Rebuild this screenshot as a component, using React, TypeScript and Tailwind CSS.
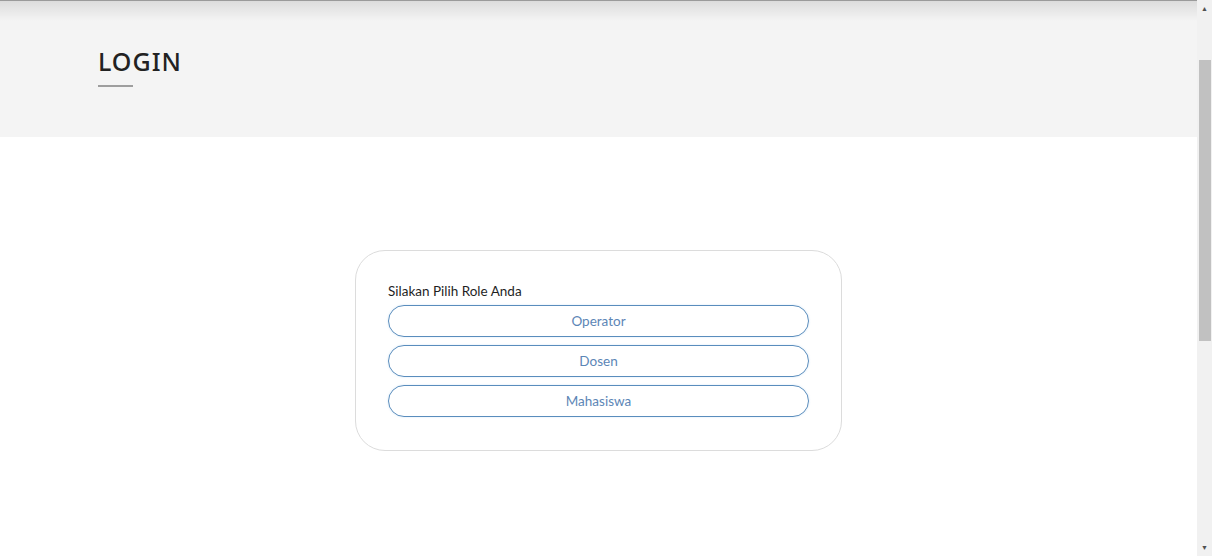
export default function App() {
  const roles = ["Operator", "Dosen", "Mahasiswa"];
  return (
    <div className="flex h-[556px] w-[1212px] overflow-hidden bg-white font-['Noto_Sans',sans-serif]">
      <div className="flex flex-1 flex-col">
        <header className="relative h-[137px] bg-[#f4f4f4] border-t border-[#9a9a9a] px-[98px] pt-[43px]">
          <div className="absolute inset-x-0 top-0 h-5 bg-gradient-to-b from-black/10 to-transparent" />
          <h1 className="text-[25px] leading-[34px] tracking-[1px] text-[#222] font-medium">LOGIN</h1>
          <div className="mt-[7px] h-[2px] w-[35px] bg-[#9e9e9e]" />
        </header>
        <main className="flex flex-1 justify-center pt-[113px]">
          <div className="h-[201px] w-[487px] rounded-[30px] border border-[#dcdcdc] px-8 pt-[31px] font-['Lato',sans-serif]">
            <p className="text-[13.5px] leading-[18px] text-[#1f1f1f]">Silakan Pilih Role Anda</p>
            <div className="mt-[5px] flex flex-col gap-2">
              {roles.map((r) => (
                <button
                  key={r}
                  className="h-8 w-[421px] rounded-full border border-[#5a8dbd] text-[13.5px] text-[#5c86b6] shadow-[0_0_2px_rgba(120,180,230,0.35)]"
                >
                  {r}
                </button>
              ))}
            </div>
          </div>
        </main>
      </div>
      <div className="flex w-[15px] flex-col items-center bg-[#f1f1f1]">
        <div className="flex h-[17px] items-center justify-center text-[7px] leading-none text-[#505050]">▲</div>
        <div className="mt-[43px] h-[281px] w-[12px] bg-[#c1c1c1]" />
        <div className="flex-1" />
        <div className="flex h-[17px] items-center justify-center text-[7px] leading-none text-[#505050]">▼</div>
      </div>
    </div>
  );
}
